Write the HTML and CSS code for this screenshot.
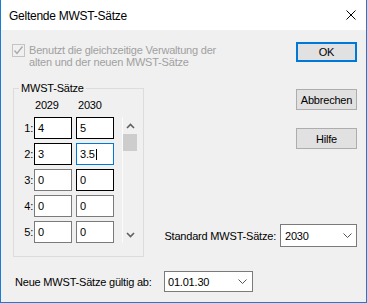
FILE: index.html
```html
<!DOCTYPE html>
<html lang="de">
<head>
<meta charset="utf-8">
<title>Geltende MWST-Sätze</title>
<link rel="stylesheet" href="styles.css">
</head>
<body>
<div class="window">
  <div class="titlebar">
    <span class="title">Geltende MWST-Sätze</span>
    <svg class="close" width="10" height="10" viewBox="0 0 10 10"><path d="M0.5 0.5 L9.5 9.5 M9.5 0.5 L0.5 9.5" stroke="#000" stroke-width="1" fill="none"/></svg>
  </div>
  <div class="content">
    <div class="top-row">
      <div class="check">
        <span class="check-box"><svg width="11" height="11" viewBox="0 0 11 11"><path d="M1.5 5.5 L4 8.5 L9.5 1.5" stroke="#a8a8a8" stroke-width="1.3" fill="none"/></svg></span>
        <span class="check-text">Benutzt die gleichzeitige Verwaltung der<br>alten und der neuen MWST-Sätze</span>
      </div>
      <div class="btn btn-default">OK</div>
    </div>
    <div class="mid-row">
      <fieldset class="group">
        <legend class="group-legend">MWST-Sätze</legend>
        <div class="group-body">
          <div class="rates">
            <div class="rate-head"><span class="rate-num"></span><span class="col-head">2029</span><span class="col-head col2">2030</span></div>
            <div class="rate-row"><span class="rate-num">1:</span><div class="cell dark">4</div><div class="cell col2 dark">5</div></div>
            <div class="rate-row"><span class="rate-num">2:</span><div class="cell dark">3</div><div class="cell col2 focus">3.5<span class="caret"></span></div></div>
            <div class="rate-row"><span class="rate-num">3:</span><div class="cell">0</div><div class="cell col2 dark">0</div></div>
            <div class="rate-row"><span class="rate-num">4:</span><div class="cell">0</div><div class="cell col2">0</div></div>
            <div class="rate-row"><span class="rate-num">5:</span><div class="cell">0</div><div class="cell col2">0</div></div>
          </div>
          <div class="scrollbar">
            <div class="sb-arrow"><svg width="9" height="6" viewBox="0 0 9 6"><path d="M1 5 L4.5 1.5 L8 5" stroke="#606060" stroke-width="1.6" fill="none"/></svg></div>
            <div class="sb-thumb"></div>
            <div class="sb-track"></div>
            <div class="sb-arrow"><svg width="9" height="6" viewBox="0 0 9 6"><path d="M1 1 L4.5 4.5 L8 1" stroke="#606060" stroke-width="1.6" fill="none"/></svg></div>
          </div>
        </div>
      </fieldset>
      <div class="side">
        <div class="btn btn-cancel">Abbrechen</div>
        <div class="btn btn-help">Hilfe</div>
        <div class="std-row">
          <span class="label">Standard MWST-Sätze:</span>
          <div class="combo combo-std"><span>2030</span><svg width="9" height="5" viewBox="0 0 9 5"><path d="M0.5 0.5 L4.5 4.5 L8.5 0.5" stroke="#555" stroke-width="1" fill="none"/></svg></div>
        </div>
      </div>
    </div>
    <div class="bottom-row">
      <span class="label date-label">Neue MWST-Sätze gültig ab:</span>
      <div class="combo combo-date"><span>01.01.30</span><svg width="9" height="5" viewBox="0 0 9 5"><path d="M0.5 0.5 L4.5 4.5 L8.5 0.5" stroke="#555" stroke-width="1" fill="none"/></svg></div>
    </div>
  </div>
</div>
</body>
</html>
```
FILE: styles.css
```css
html, body {
  margin: 0;
  padding: 0;
  background: #ffffff;
}
body {
  font-family: "Liberation Sans", Arial, sans-serif;
  font-size: 11px;
  letter-spacing: -0.2px;
  color: #000;
}
.window {
  width: 367px;
  height: 303px;
  box-sizing: border-box;
  border: 1px solid #1c7cd5;
  border-top: none;
  display: flex;
  flex-direction: column;
  background: #f0f0f0;
}
.titlebar {
  height: 30px;
  flex: none;
  background: #fff;
  display: flex;
  align-items: center;
  justify-content: space-between;
  padding: 0 10px 0 8px;
}
.title {
  font-size: 12px;
  letter-spacing: -0.25px;
  line-height: 14px;
  margin-top: 1px;
}
.close {
  display: block;
}
.content {
  flex: 1;
  display: flex;
  flex-direction: column;
  padding: 0 9px 0 11px;
}
.top-row {
  margin-top: 12px;
  display: flex;
  justify-content: space-between;
  align-items: flex-start;
}
.check {
  margin-top: 2px;
  display: flex;
  align-items: flex-start;
}
.check-box {
  width: 11px;
  height: 11px;
  border: 1px solid #c4c4c4;
  background: #f0f0f0;
  display: block;
  margin-right: 4px;
}
.check-box svg {
  display: block;
}
.check-text {
  color: #a0a0a0;
  line-height: 12px;
}
.btn {
  box-sizing: border-box;
  width: 61px;
  height: 21px;
  border: 1px solid #adadad;
  background: #e1e1e1;
  display: flex;
  align-items: center;
  justify-content: center;
  line-height: 12px;
}
.btn-default {
  height: 20px;
  border: 2px solid #0078d7;
}
.mid-row {
  margin-top: 14px;
  display: flex;
}
.group {
  margin: 0 0 0 1px;
  width: 131px;
  height: 175px;
  box-sizing: border-box;
  border: 1px solid #dcdcdc;
  padding: 5px 0 0 0;
  min-width: 0;
}
.group-legend {
  margin-left: 5px;
  padding: 0 2px;
  line-height: 12px;
}
.group-body {
  display: flex;
  align-items: flex-start;
}
.rates {
  display: flex;
  flex-direction: column;
  gap: 4px;
}
.rate-head {
  display: flex;
  line-height: 12px;
  margin-bottom: 2px;
}
.rate-row {
  display: flex;
  align-items: center;
  height: 22px;
}
.rate-num {
  width: 20px;
  text-align: right;
  padding-right: 1px;
  box-sizing: border-box;
}
.col-head {
  width: 38px;
  padding-left: 1px;
}
.col2 {
  margin-left: 4px;
}
.cell {
  width: 38px;
  height: 22px;
  box-sizing: border-box;
  border: 1px solid #7a7a7a;
  background: #fff;
  padding-left: 3px;
  display: flex;
  align-items: center;
  line-height: 12px;
}
.cell.dark {
  border-color: #000;
}
.cell.focus {
  border-color: #0078d7;
}
.caret {
  display: inline-block;
  width: 1px;
  height: 11px;
  background: #000;
  margin-left: 1px;
}
.scrollbar {
  margin-top: 18px;
  margin-left: 6px;
  width: 14px;
  height: 126px;
  border-left: 1px solid #fbfbfb;
  display: flex;
  flex-direction: column;
}
.sb-arrow {
  height: 17px;
  display: flex;
  align-items: center;
  justify-content: center;
}
.sb-arrow svg {
  display: block;
}
.sb-thumb {
  height: 17px;
  background: #cdcdcd;
}
.sb-track {
  flex: 1;
}
.side {
  flex: 1;
  display: flex;
  flex-direction: column;
  align-items: flex-end;
}
.btn-cancel {
  margin-top: 7px;
}
.btn-help {
  margin-top: 18px;
}
.std-row {
  margin-top: auto;
  margin-bottom: 10px;
  display: flex;
  align-items: center;
  gap: 4px;
}
.label {
  line-height: 12px;
}
.combo {
  box-sizing: border-box;
  border: 1px solid #7a7a7a;
  background: #fff;
  display: flex;
  align-items: center;
  justify-content: space-between;
  line-height: 12px;
}
.combo svg {
  display: block;
}
.combo-std {
  width: 77px;
  height: 23px;
  padding: 0 4px 0 4px;
}
.combo-date {
  width: 89px;
  height: 21px;
  padding: 0 5px 0 3px;
}
.bottom-row {
  margin-top: 14px;
  display: flex;
  align-items: center;
}
.date-label {
  margin-left: 3px;
  width: 149px;
}
```
